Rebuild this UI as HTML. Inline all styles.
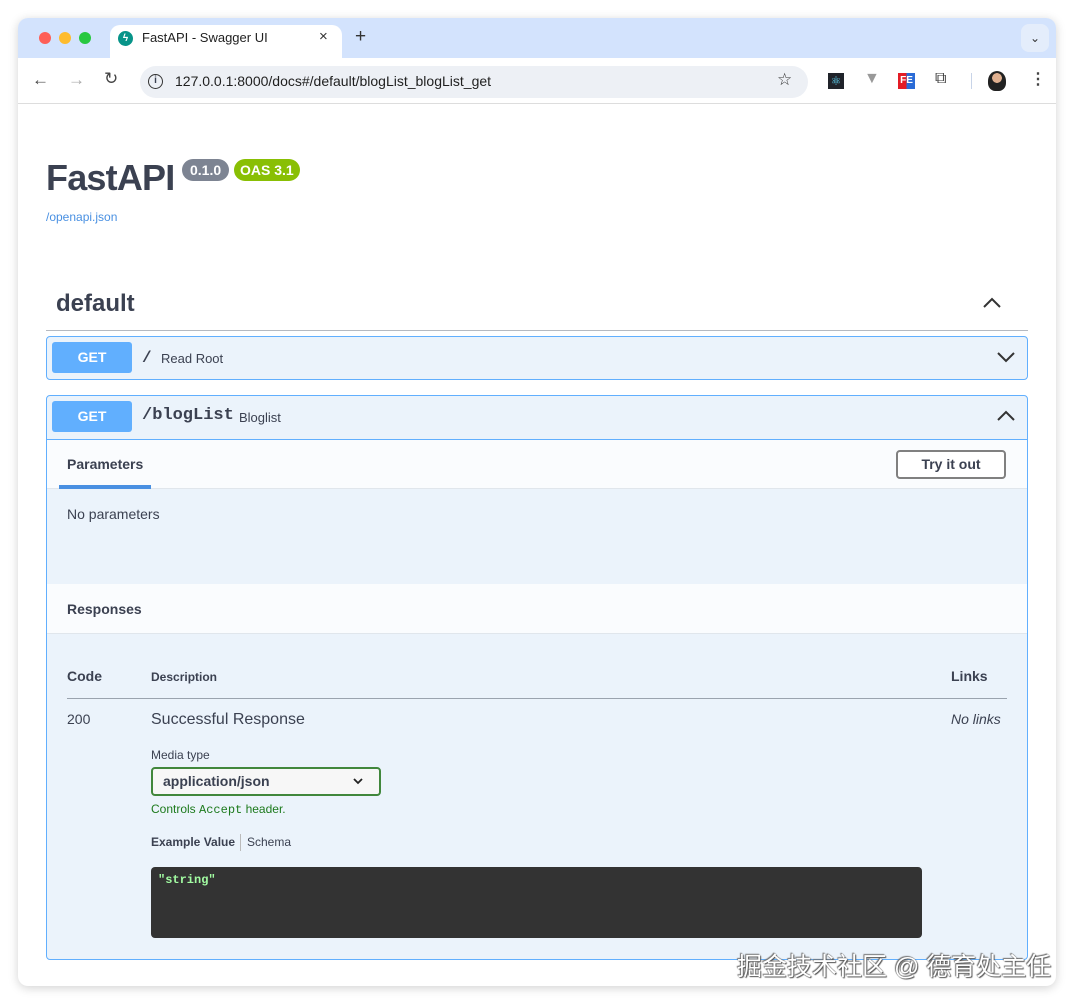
<!DOCTYPE html>
<html><head><meta charset="utf-8"><style>
*{box-sizing:border-box;margin:0;padding:0}
body{width:1074px;height:1004px;background:#fff;font-family:"Liberation Sans",sans-serif;color:#3b4151;position:relative;overflow:hidden}
.a{position:absolute}
.win{left:18px;top:18px;width:1038px;height:968px;border-radius:10px;background:#fff;box-shadow:0 2px 10px rgba(0,0,0,.18);overflow:hidden}
.t{white-space:nowrap}
.mono{font-family:"Liberation Mono",monospace}
</style></head><body>
<div class="a win">
 <div class="a" style="left:0;top:0;width:1038px;height:40px;background:#d3e3fd"></div>
 <div class="a" style="left:21px;top:14px;width:12px;height:12px;border-radius:50%;background:#fe5f57"></div>
 <div class="a" style="left:41px;top:14px;width:12px;height:12px;border-radius:50%;background:#febc2e"></div>
 <div class="a" style="left:61px;top:14px;width:12px;height:12px;border-radius:50%;background:#28c840"></div>
 <div class="a" style="left:92px;top:7px;width:232px;height:40px;background:#fff;border-radius:10px 10px 0 0"></div>
 <div class="a" style="left:100px;top:13px;width:15px;height:15px;border-radius:50%;background:#079489;color:#fff;font-size:10px;text-align:center;line-height:15px;font-weight:bold">ϟ</div>
 <div class="a t" style="left:124px;top:12px;font-size:13px;color:#1f1f1f">FastAPI - Swagger UI</div>
 <div class="a t" style="left:301px;top:10px;font-size:15px;color:#333">×</div>
 <div class="a t" style="left:337px;top:8px;font-size:19px;color:#333">+</div>
 <div class="a" style="left:1003px;top:6px;width:28px;height:28px;border-radius:8px;background:#e4edfb;text-align:center;font-size:12px;line-height:28px;color:#333">⌄</div>
 <div class="a" style="left:0;top:40px;width:1038px;height:46px;background:#fff;border-bottom:1px solid #ddd"></div>
 <div class="a t" style="left:14px;top:52px;font-size:17px;color:#444">←</div>
 <div class="a t" style="left:50px;top:52px;font-size:17px;color:#aaa">→</div>
 <div class="a t" style="left:86px;top:51px;font-size:17px;color:#444">↻</div>
 <div class="a" style="left:122px;top:48px;width:668px;height:32px;border-radius:16px;background:#edf0f5"></div>
 <div class="a" style="left:130px;top:56px;width:15px;height:15px;border-radius:50%;border:1.5px solid #333;font-size:10px;text-align:center;line-height:12px;font-weight:bold">i</div>
 <div class="a t" style="left:157px;top:55px;font-size:14px;color:#1f1f1f">127.0.0.1:8000/docs#/default/blogList_blogList_get</div>
 <div class="a t" style="left:759px;top:52px;font-size:17px;color:#333">☆</div>
 <div class="a" style="left:810px;top:55px;width:16px;height:16px;background:#20232a;color:#61dafb;font-size:12px;text-align:center;line-height:16px">⚛</div>
 <div class="a t" style="left:846px;top:52px;font-size:16px;color:#999">▼</div>
 <div class="a" style="left:880px;top:55px;width:17px;height:16px;background:linear-gradient(90deg,#e31c25 50%,#2a6bd6 50%);color:#fff;font-size:10px;font-weight:bold;text-align:center;line-height:16px">FE</div>
 <div class="a t" style="left:917px;top:52px;font-size:16px;color:#333">⧉</div>
 <div class="a" style="left:953px;top:55px;width:1px;height:16px;background:#c8d4e8"></div>
 <div class="a" style="left:970px;top:53px;width:18px;height:20px;border-radius:50% 50% 40% 40%;background:radial-gradient(circle at 50% 35%,#e0b090 30%,#222 32%)"></div>
 <div class="a t" style="left:1012px;top:51px;font-size:16px;color:#444;font-weight:bold">⋮</div>

 <!-- content -->
 <div class="a t" style="left:28px;top:139px;font-size:36px;font-weight:bold;color:#3b4151;letter-spacing:-0.8px">FastAPI</div>
 <div class="a t" style="left:164px;top:141px;height:22px;padding:0 8px;border-radius:11px;background:#7d8492;color:#fff;font-size:14px;font-weight:bold;line-height:22px">0.1.0</div>
 <div class="a t" style="left:216px;top:141px;height:22px;padding:0 6px;border-radius:11px;background:#89bf04;color:#fff;font-size:14px;font-weight:bold;line-height:22px">OAS 3.1</div>
 <div class="a t" style="left:28px;top:192px;font-size:12px;color:#4990e2">/openapi.json</div>

 <div class="a t" style="left:38px;top:272px;font-size:24px;font-weight:bold">default</div>
 <svg class="a" style="left:964px;top:277px" width="20" height="14" viewBox="0 0 20 14"><path d="M2 12 L10 4 L18 12" fill="none" stroke="#333" stroke-width="2"/></svg>
 <div class="a" style="left:28px;top:312px;width:982px;height:1px;background:#b5b9c0"></div>

 <div class="a" style="left:28px;top:318px;width:982px;height:44px;border:1px solid #61affe;border-radius:4px;background:#ebf3fb"></div>
 <div class="a t" style="left:34px;top:324px;width:80px;height:31px;border-radius:3px;background:#61affe;color:#fff;font-size:14px;font-weight:bold;text-align:center;line-height:31px">GET</div>
 <div class="a t mono" style="left:124px;top:331px;font-size:16px;font-weight:bold">/</div>
 <div class="a t" style="left:143px;top:333px;font-size:13px">Read Root</div>
 <svg class="a" style="left:978px;top:332px" width="20" height="14" viewBox="0 0 20 14"><path d="M2 3 L10 11 L18 3" fill="none" stroke="#333" stroke-width="2"/></svg>

 <div class="a" style="left:28px;top:377px;width:982px;height:565px;border:1px solid #61affe;border-radius:4px;background:#ebf3fb;overflow:hidden">
  <div class="a" style="left:0;top:43px;width:980px;height:50px;background:#fafcfe;border-top:1px solid #61affe;border-bottom:1px solid #e0e6ec"></div>
  <div class="a" style="left:0;top:188px;width:980px;height:50px;background:#fafcfe;border-bottom:1px solid #e0e6ec"></div>
 </div>
 <div class="a t" style="left:34px;top:383px;width:80px;height:31px;border-radius:3px;background:#61affe;color:#fff;font-size:14px;font-weight:bold;text-align:center;line-height:31px">GET</div>
 <div class="a t mono" style="left:124px;top:388px;font-size:17px;font-weight:bold">/blogList</div>
 <div class="a t" style="left:221px;top:392px;font-size:13px">Bloglist</div>
 <svg class="a" style="left:978px;top:390px" width="20" height="14" viewBox="0 0 20 14"><path d="M2 12 L10 4 L18 12" fill="none" stroke="#333" stroke-width="2"/></svg>
 <div class="a t" style="left:49px;top:438px;font-size:14px;font-weight:bold">Parameters</div>
 <div class="a" style="left:41px;top:467px;width:92px;height:4px;background:#4990e2"></div>
 <div class="a t" style="left:878px;top:432px;width:110px;height:29px;border:2px solid #808080;border-radius:4px;font-size:14px;font-weight:bold;text-align:center;line-height:25px;background:#fff">Try it out</div>
 <div class="a t" style="left:49px;top:488px;font-size:14px">No parameters</div>
 <div class="a t" style="left:49px;top:583px;font-size:14px;font-weight:bold">Responses</div>
 <div class="a t" style="left:49px;top:650px;font-size:14px;font-weight:bold">Code</div>
 <div class="a t" style="left:133px;top:652px;font-size:12px;font-weight:bold">Description</div>
 <div class="a t" style="left:933px;top:650px;font-size:14px;font-weight:bold">Links</div>
 <div class="a" style="left:49px;top:680px;width:940px;height:1px;background:#9aa3ae"></div>
 <div class="a t" style="left:49px;top:693px;font-size:14px">200</div>
 <div class="a t" style="left:133px;top:693px;font-size:16px">Successful Response</div>
 <div class="a t" style="left:933px;top:693px;font-size:14px;font-style:italic">No links</div>
 <div class="a t" style="left:133px;top:730px;font-size:12px">Media type</div>
 <div class="a" style="left:133px;top:749px;width:230px;height:29px;border:2px solid #41873c;border-radius:4px;background:#f7f7f7"></div>
 <div class="a t" style="left:145px;top:755px;font-size:14px;font-weight:bold">application/json</div>
 <svg class="a" style="left:334px;top:758px" width="12" height="10" viewBox="0 0 12 10"><path d="M2 3 L6 7 L10 3" fill="none" stroke="#222" stroke-width="1.8"/></svg>
 <div class="a t" style="left:133px;top:784px;font-size:12px;color:#1d7a1d">Controls <span class="mono">Accept</span> header.</div>
 <div class="a t" style="left:133px;top:817px;font-size:12px;font-weight:bold">Example Value</div>
 <div class="a" style="left:222px;top:816px;width:1px;height:17px;background:#bbb"></div>
 <div class="a t" style="left:229px;top:817px;font-size:12px">Schema</div>
 <div class="a" style="left:133px;top:849px;width:771px;height:71px;border-radius:4px;background:#333"></div>
 <div class="a t mono" style="left:140px;top:855px;font-size:12px;font-weight:bold;color:#a2fca2">"string"</div>
</div>
<div class="a t" style="left:737px;top:947px;font-size:25px;color:#fff;font-family:'Liberation Sans','Noto Sans CJK SC',sans-serif;text-shadow:0 0 1px #555,1px 1px 1px #555,-1px -1px 1px #777">掘金技术社区 @ 德育处主任</div>
</body></html>
